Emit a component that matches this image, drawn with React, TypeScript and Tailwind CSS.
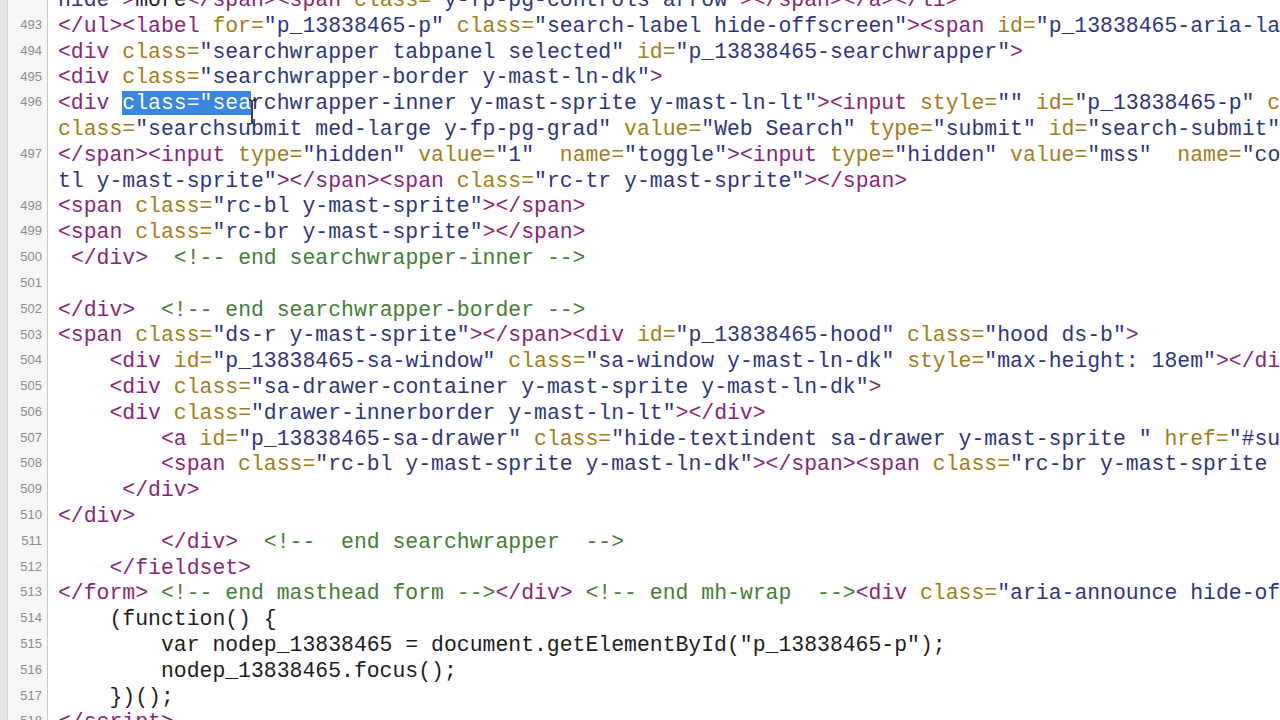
import React from "react";

type Mode = "text" | "tag" | "value" | "comment" | "js";

const C = {
  text: "#1c1c1c",
  tag: "#8a2576",
  attr: "#a27d18",
  value: "#2d3580",
  comment: "#447d36",
  js: "#1c1c1c",
};

type Row = { n: string; t: string; m: Mode; sel?: [number, number] };

const rows: Row[] = [
  { n: "", t: 'hide">more</span><span class="y-fp-pg-controls arrow"></span></a></li>', m: "value" },
  { n: "493", t: '</ul><label for="p_13838465-p" class="search-label hide-offscreen"><span id="p_13838465-aria-label">Search</span></label>', m: "text" },
  { n: "494", t: '<div class="searchwrapper tabpanel selected" id="p_13838465-searchwrapper">', m: "text" },
  { n: "495", t: '<div class="searchwrapper-border y-mast-ln-dk">', m: "text" },
  { n: "496", t: '<div class="searchwrapper-inner y-mast-sprite y-mast-ln-lt"><input style="" id="p_13838465-p" class="input-query">', m: "text", sel: [5, 15] },
  { n: "", t: 'class="searchsubmit med-large y-fp-pg-grad" value="Web Search" type="submit" id="search-submit">', m: "tag" },
  { n: "497", t: '</span><input type="hidden" value="1"  name="toggle"><input type="hidden" value="mss"  name="context">', m: "text" },
  { n: "", t: 'tl y-mast-sprite"></span><span class="rc-tr y-mast-sprite"></span>', m: "value" },
  { n: "498", t: '<span class="rc-bl y-mast-sprite"></span>', m: "text" },
  { n: "499", t: '<span class="rc-br y-mast-sprite"></span>', m: "text" },
  { n: "500", t: ' </div>  <!-- end searchwrapper-inner -->', m: "text" },
  { n: "501", t: "", m: "text" },
  { n: "502", t: '</div>  <!-- end searchwrapper-border -->', m: "text" },
  { n: "503", t: '<span class="ds-r y-mast-sprite"></span><div id="p_13838465-hood" class="hood ds-b">', m: "text" },
  { n: "504", t: '    <div id="p_13838465-sa-window" class="sa-window y-mast-ln-dk" style="max-height: 18em"></div>', m: "text" },
  { n: "505", t: '    <div class="sa-drawer-container y-mast-sprite y-mast-ln-dk">', m: "text" },
  { n: "506", t: '    <div class="drawer-innerborder y-mast-ln-lt"></div>', m: "text" },
  { n: "507", t: '        <a id="p_13838465-sa-drawer" class="hide-textindent sa-drawer y-mast-sprite " href="#sugg">', m: "text" },
  { n: "508", t: '        <span class="rc-bl y-mast-sprite y-mast-ln-dk"></span><span class="rc-br y-mast-sprite y-mast-ln-dk">', m: "text" },
  { n: "509", t: '     </div>', m: "text" },
  { n: "510", t: '</div>', m: "text" },
  { n: "511", t: '        </div>  <!--  end searchwrapper  -->', m: "text" },
  { n: "512", t: '    </fieldset>', m: "text" },
  { n: "513", t: '</form> <!-- end masthead form --></div> <!-- end mh-wrap  --><div class="aria-announce hide-offscreen">', m: "text" },
  { n: "514", t: '    (function() {', m: "js" },
  { n: "515", t: '        var nodep_13838465 = document.getElementById("p_13838465-p");', m: "js" },
  { n: "516", t: '        nodep_13838465.focus();', m: "js" },
  { n: "517", t: '    })();', m: "js" },
  { n: "518", t: '</script>', m: "text" },
];

function colorize(s: string, start: Mode): string[] {
  const out: string[] = [];
  let mode: Mode = start;
  let i = 0;
  while (i < s.length) {
    const ch = s[i];
    if (mode === "js") {
      out.push(C.js);
      i++;
      continue;
    }
    if (mode === "comment") {
      if (s.startsWith("-->", i)) {
        out.push(C.comment, C.comment, C.comment);
        i += 3;
        mode = "text";
      } else {
        out.push(C.comment);
        i++;
      }
      continue;
    }
    if (mode === "value") {
      out.push(C.value);
      if (ch === '"') mode = "tag";
      i++;
      continue;
    }
    if (mode === "text") {
      if (s.startsWith("<!--", i)) {
        out.push(C.comment, C.comment, C.comment, C.comment);
        i += 4;
        mode = "comment";
        continue;
      }
      if (ch === "<") {
        out.push(C.tag);
        i++;
        while (i < s.length && /[\/a-zA-Z0-9]/.test(s[i])) {
          out.push(C.tag);
          i++;
        }
        mode = "tag";
        continue;
      }
      out.push(C.text);
      i++;
      continue;
    }
    if (ch === ">" || ch === "/") {
      out.push(C.tag);
      if (ch === ">") mode = "text";
      i++;
      continue;
    }
    if (ch === '"') {
      out.push(C.value);
      mode = "value";
      i++;
      continue;
    }
    out.push(C.attr);
    i++;
  }
  return out;
}

function CodeLine({ row }: { row: Row }) {
  const colors = colorize(row.t, row.m);
  const segs: { text: string; color: string; sel: boolean }[] = [];
  for (let i = 0; i < row.t.length; i++) {
    const sel = !!row.sel && i >= row.sel[0] && i < row.sel[1];
    const color = sel ? "#ffffff" : colors[i];
    const last = segs[segs.length - 1];
    if (last && last.color === color && last.sel === sel) last.text += row.t[i];
    else segs.push({ text: row.t[i], color, sel });
  }
  return (
    <div className="flex h-[25.8px] items-center">
      <div className="w-[8px] h-full shrink-0 bg-[#e4e4e4] border-r border-[#d2d2d2]" />
      <div className="w-[40px] h-full shrink-0 bg-[#f6f6f6] border-r border-[#c9c9c9] flex items-center justify-end pr-[5px] text-[13px] text-[#8c8c8c] font-['Liberation_Sans',Arial,sans-serif]">
        {row.n}
      </div>
      <div className="pl-[10px] whitespace-pre text-[21.45px] leading-[25.8px] font-['Liberation_Mono','Courier_New',monospace] relative top-[2px]">
        {segs.map((s, k) =>
          s.sel ? (
            <span key={k} className="bg-[#3a86e0]" style={{ color: s.color }}>
              {s.text}
            </span>
          ) : (
            <span key={k} style={{ color: s.color }}>
              {s.text}
            </span>
          )
        )}
        {row.sel && (
          <svg className="absolute left-[199px] top-[8px]" width="10" height="26" viewBox="0 0 10 26">
            <path d="M2 1 H4 M6 1 H8 M5 1 V25 M2 25 H4 M6 25 H8" stroke="#111" strokeWidth="1.6" fill="none" />
          </svg>
        )}
      </div>
    </div>
  );
}

export default function App() {
  return (
    <div className="w-[1280px] h-[720px] overflow-hidden bg-white">
      <div className="-mt-[14px]">
        {rows.map((r, i) => (
          <CodeLine key={i} row={r} />
        ))}
      </div>
    </div>
  );
}
